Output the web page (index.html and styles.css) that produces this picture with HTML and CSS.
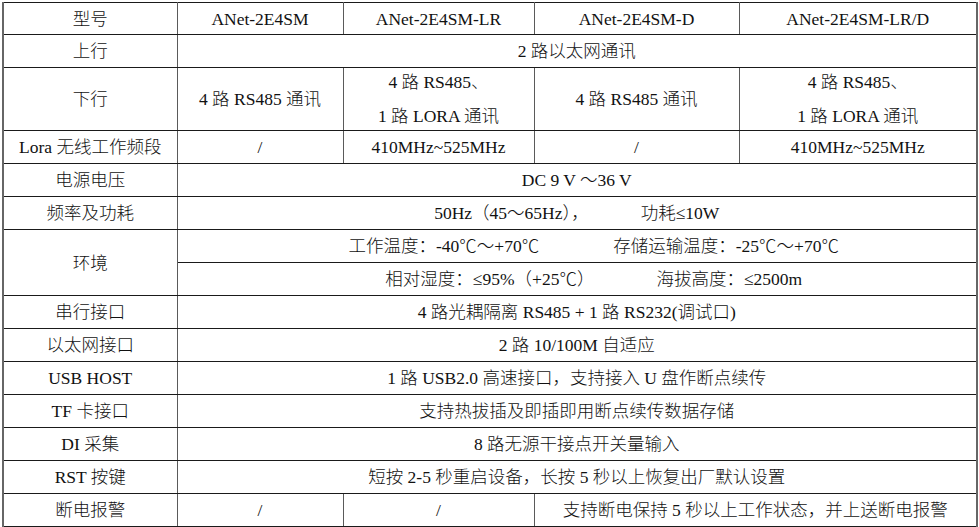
FILE: index.html
```html
<!DOCTYPE html>
<html lang="zh-CN">
<head>
<meta charset="utf-8">
<title>ANet-2E4SM 参数</title>
<link rel="stylesheet" href="styles.css">
</head>
<body>
<div class="page">
<table class="spec">
  <colgroup>
    <col class="c1"><col class="c2"><col class="c3"><col class="c4"><col class="c5">
  </colgroup>
  <tr class="row first">
    <td>型号</td><td>ANet-2E4SM</td><td>ANet-2E4SM-LR</td><td>ANet-2E4SM-D</td><td>ANet-2E4SM-LR/D</td>
  </tr>
  <tr class="row">
    <td>上行</td><td colspan="4">2 路以太网通讯</td>
  </tr>
  <tr class="row tall">
    <td>下行</td>
    <td>4 路 RS485 通讯</td>
    <td><div class="two">4 路 RS485、<br>1 路 LORA 通讯</div></td>
    <td>4 路 RS485 通讯</td>
    <td><div class="two">4 路 RS485、<br>1 路 LORA 通讯</div></td>
  </tr>
  <tr class="row">
    <td>Lora 无线工作频段</td><td>/</td><td>410MHz~525MHz</td><td>/</td><td>410MHz~525MHz</td>
  </tr>
  <tr class="row">
    <td>电源电压</td><td colspan="4">DC 9 V ～36 V</td>
  </tr>
  <tr class="row">
    <td>频率及功耗</td><td colspan="4"><span class="pair gap-a"><span>50Hz（45～65Hz），</span><span>功耗≤10W</span></span></td>
  </tr>
  <tr class="row">
    <td rowspan="2">环境</td>
    <td colspan="4" class="env"><span class="pair gap-b"><span>工作温度：-40℃～+70℃</span><span>存储运输温度：-25℃～+70℃</span></span></td>
  </tr>
  <tr class="row">
    <td colspan="4" class="env"><span class="pair gap-c"><span>相对湿度：≤95%（+25℃）</span><span>海拔高度：≤2500m</span></span></td>
  </tr>
  <tr class="row">
    <td>串行接口</td><td colspan="4">4 路光耦隔离 RS485 + 1 路 RS232(调试口)</td>
  </tr>
  <tr class="row">
    <td>以太网接口</td><td colspan="4">2 路 10/100M 自适应</td>
  </tr>
  <tr class="row">
    <td>USB HOST</td><td colspan="4">1 路 USB2.0 高速接口，支持接入 U 盘作断点续传</td>
  </tr>
  <tr class="row">
    <td>TF 卡接口</td><td colspan="4">支持热拔插及即插即用断点续传数据存储</td>
  </tr>
  <tr class="row">
    <td>DI 采集</td><td colspan="4">8 路无源干接点开关量输入</td>
  </tr>
  <tr class="row">
    <td>RST 按键</td><td colspan="4">短按 2-5 秒重启设备，长按 5 秒以上恢复出厂默认设置</td>
  </tr>
  <tr class="row">
    <td>断电报警</td><td>/</td><td>/</td><td colspan="2">支持断电保持 5 秒以上工作状态，并上送断电报警</td>
  </tr>
  <tr class="row">
    <td></td><td></td><td></td><td></td><td></td>
  </tr>
</table>
</div>
</body>
</html>
```

FILE: styles.css
```css
html, body {
  margin: 0;
  padding: 0;
  background: #ffffff;
}

.page {
  padding: 2px 0 0 2px;
}

.spec {
  border-collapse: collapse;
  table-layout: fixed;
  width: 975px;
  font-family: "Liberation Serif", "Noto Sans CJK SC", serif;
  font-size: 17.5px;
  font-weight: 300;
  color: #111111;
  border-left: 2px solid #666666;
  border-right: 2px solid #666666;
}

.c1 { width: 174px; }
.c2 { width: 166px; }
.c3 { width: 191px; }
.c4 { width: 205px; }
.c5 { width: 238px; }

.spec td {
  padding: 0;
  text-align: center;
  vertical-align: middle;
  line-height: 24px;
  border-top: 1px solid #1a1a1a;
  border-bottom: 1px solid #1a1a1a;
  border-left: 1px solid #5a5a5a;
  border-right: 1px solid #5a5a5a;
  white-space: nowrap;
}

.row { height: 33px; }
.row.first { height: 32px; }
.row.tall { height: 63px; }

.two {
  line-height: 34px;
  margin: -3px 0;
}

.pair {
  display: inline-flex;
  align-items: center;
}

.gap-a { gap: 52px; }
.gap-b { gap: 74px; }
.gap-c { gap: 62px; }

.env {
  padding-left: 34px !important;
}
```
